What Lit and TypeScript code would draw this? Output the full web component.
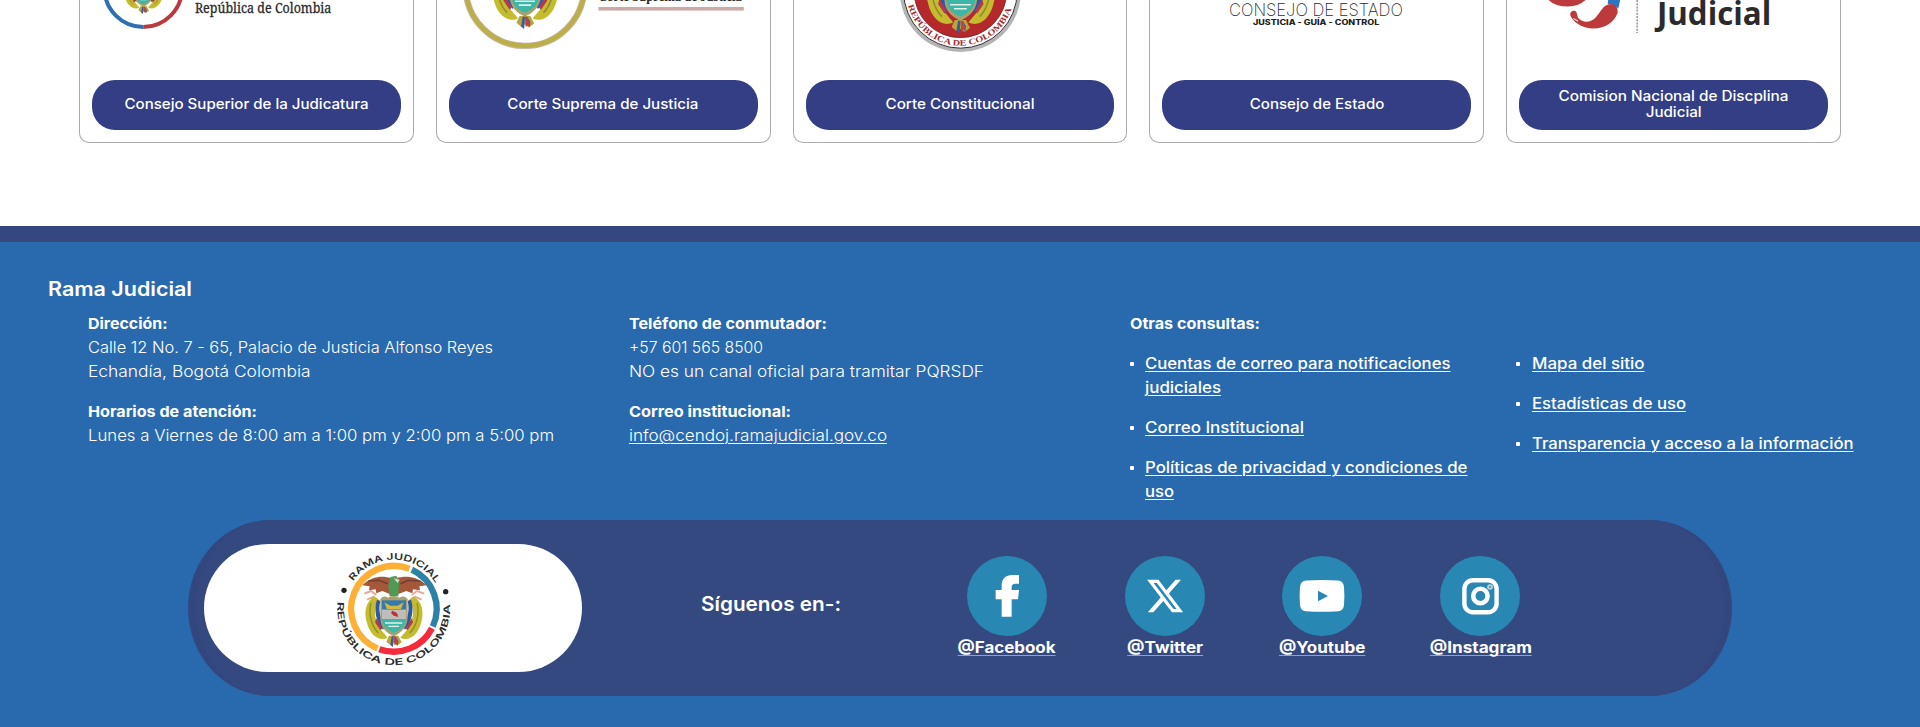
import { LitElement, html, svg, css } from "lit";
import { customElement } from "lit/decorators.js";

/* Text run stretched horizontally so that it occupies a given width. */
const fit = (text: string, width: number) =>
  html`<span class="fit" data-w=${width}>${text}</span>`;

/* Coat of arms, drawn around x = 248 with its ribbon ending at y = 318. */
const crest = (cx: number, bottom: number, s: number) => svg`
  <g transform="translate(${cx - 248 * s} ${bottom - 318 * s}) scale(${s})">
    <path d="M240 112C215 103 180 106 154 133L176 136 174 148 194 145 196 157 214 150 238 160Z" fill="#a5573a"/>
    <path d="M256 112C282 103 320 106 347 133L325 136 327 148 306 145 304 157 286 150 260 160Z" fill="#a5573a"/>
    <path d="M172 120L205 118 230 128M328 120L292 118 268 128" stroke="#6e4032" stroke-width="5" fill="none"/>
    <path d="M160 158L180 150 196 162M168 176L190 166M340 158L318 150 302 162M332 176L310 166" stroke="#e3aa9c" stroke-width="6" fill="none"/>
    <path d="M238 108L256 104 264 124 262 166 236 166 232 136Z" fill="#4f9a55"/>
    <path d="M248 112L266 116 260 126Z" fill="#dcdcd0"/>
    <path d="M190 166C164 182 158 214 168 246C176 280 204 304 230 290L206 262C190 232 184 200 206 178Z" fill="#c4bb2e"/>
    <path d="M308 166C334 182 340 214 330 246C322 280 294 304 268 290L292 262C308 232 314 200 292 178Z" fill="#c4bb2e"/>
    <path d="M180 186C172 216 180 254 202 276M318 186C326 216 318 254 296 276" stroke="#8f8d2c" stroke-width="4" fill="none"/>
    <path d="M198 176C188 206 194 240 216 266L224 254C206 232 202 206 208 180Z" fill="#2d58a5"/>
    <path d="M300 176C310 206 304 240 282 266L274 254C292 232 296 206 290 180Z" fill="#2d58a5"/>
    <path d="M196 232L214 262 208 268 192 244ZM302 232L284 262 290 268 306 244Z" fill="#b23a4c"/>
    <path d="M208 174Q218 162 230 170 248 160 266 170 278 162 290 174V232C288 262 268 276 248 286C228 276 208 262 208 232Z" fill="#a9a06a"/>
    <path d="M213 178H285V206H213Z" fill="#3579ad"/>
    <path d="M220 184L238 194 260 194 278 184 270 204H228Z" fill="#d1b944"/>
    <path d="M213 206H285V234H213Z" fill="#bdbdb9"/>
    <path d="M213 234H285C282 258 266 268 248 276C230 268 216 258 213 234Z" fill="#3bb7a7"/>
    <path d="M222 246H274M232 256H264" stroke="#e8efe9" stroke-width="4"/>
    <path d="M244 209L258 216 262 228 248 224 240 216Z" fill="#bf3038"/>
    <path d="M234 284L262 284 272 304 258 314 248 306 238 312 226 302Z" fill="#b7a63d"/>
    <path d="M242 286L248 286 246 318 238 312ZM254 286L262 300 260 314 252 300Z" fill="#3a5b9e"/>
    <path d="M248 286H254L262 306 250 312Z" fill="#b6474b"/>
  </g>`;

const logos = [
  svg`
    <path d="M143.3-50.6A38.8 38.8 0 0 0 143.3 27" fill="none" stroke="#2c6fb3" stroke-width="4"/>
    <path d="M143.3 27A38.8 38.8 0 0 0 143.3-50.6" fill="none" stroke="#b93b40" stroke-width="4"/>
    ${crest(143.5, 14, 0.23)}
    <text x="195" y="13" font-family="'Noto Serif','Liberation Serif',serif" font-size="14.2" fill="#2b2b2b" stroke="#2b2b2b" stroke-width=".3" textLength="136.5" lengthAdjust="spacingAndGlyphs">República de Colombia</text>`,
  svg`
    <circle cx="525" cy="-13.5" r="59.4" fill="none" stroke="#c9b3a4" stroke-width="6.4"/>
    <circle cx="525" cy="-13.5" r="59.3" fill="none" stroke="#bbaf47" stroke-width="4.6"/>
    ${crest(525, 29, 0.385)}
    <text x="598" y="1.3" font-family="'Liberation Serif',serif" font-weight="700" font-size="14" fill="#2a2a2a" textLength="144" lengthAdjust="spacingAndGlyphs">Corte Suprema de Justicia</text>
    <rect x="598.5" y="7" width="145.5" height="3.6" fill="#cda9a8"/>`,
  svg`
    <circle cx="960" cy="-8.6" r="60.6" fill="#b4b4b4"/>
    <circle cx="960" cy="-8.6" r="56.8" fill="#fff" stroke="#3a3030" stroke-width="1"/>
    <circle cx="960" cy="-8.6" r="46.3" fill="#b5282b" stroke="#5d2222" stroke-width=".7"/>
    ${crest(960, 33.5, 0.4)}
    <path id="seal-arc" d="M907.8 5.5A54 54 0 0 0 1012.2 5.5" fill="none"/>
    <text font-family="'Liberation Serif',serif" font-weight="700" font-size="8.4" fill="#9c3034"><textPath href="#seal-arc" textLength="138" lengthAdjust="spacingAndGlyphs">REPÚBLICA DE COLOMBIA</textPath></text>`,
  svg`
    <text x="1229" y="15.6" font-family="Inter,'Liberation Sans',sans-serif" font-weight="200" font-size="17.4" fill="#2c2c2c" textLength="174" lengthAdjust="spacingAndGlyphs">CONSEJO DE ESTADO</text>
    <text x="1253" y="25.3" font-family="Inter,'Liberation Sans',sans-serif" font-weight="800" font-size="7.3" fill="#222" textLength="126.5" lengthAdjust="spacingAndGlyphs">JUSTICIA - GUÍA - CONTROL</text>`,
  svg`
    <g transform="translate(1490 0) scale(.331)">
      <path d="M170-8Q190 20 236 20 276 18 296-8Z" fill="#bd3a3c"/>
      <path d="M358-8L356 12Q374 10 388 26L395-8Z" fill="#2876c5"/>
      <path d="M243 46C240 34 254 28 261 36L266 54C282 72 306 68 320 52C336 34 342 12 368 12Q388 16 386 38C376 68 346 88 308 86C276 84 250 66 243 46Z" fill="#bd3a3c"/>
      <path d="M252 56L266 64" stroke="#e6d9d3" stroke-width="4"/>
    </g>
    <path d="M1637.2 0V33" stroke="#777" stroke-width="1.2" stroke-dasharray="2 1.2"/>
    <text x="1657" y="25.3" font-family="'Open Sans','Noto Sans',sans-serif" font-weight="700" font-size="32.5" fill="#2b2b2d" textLength="114.5" lengthAdjust="spacingAndGlyphs">Judicial</text>`,
];

const courts = [
  { x: 80, lines: [["Consejo Superior de la Judicatura", 244]] },
  { x: 437, lines: [["Corte Suprema de Justicia", 191]] },
  { x: 793.5, lines: [["Corte Constitucional", 149]] },
  { x: 1150, lines: [["Consejo de Estado", 134.5]] },
  { x: 1507, lines: [["Comision Nacional de Discplina", 230], ["Judicial", 56]] },
] as { x: number; lines: [string, number][] }[];

const linksA: [string, number][][] = [
  [["Cuentas de correo para notificaciones", 305.5], ["judiciales", 76]],
  [["Correo Institucional", 159]],
  [["Políticas de privacidad y condiciones de", 322.5], ["uso", 29]],
];
const linksB: [string, number][][] = [
  [["Mapa del sitio", 112.5]],
  [["Estadísticas de uso", 154]],
  [["Transparencia y acceso a la información", 321.5]],
];

const socials = [
  {
    name: "@Facebook", w: 98,
    icon: svg`<path transform="scale(.3333)" d="M104 182V130H86V102H104V88C104 68 116 57 136 57H156V83H145C137 83 134 87 134 93V102H156L153 130H134V182Z" fill="#fff"/>`,
  },
  {
    name: "@Twitter", w: 76,
    icon: svg`<path transform="translate(20 20) scale(1.67)" d="M18.244 2.25h3.308l-7.227 8.26 8.502 11.24H16.17l-5.214-6.817L4.99 21.75H1.68l7.73-8.835L1.254 2.25H8.08l4.713 6.231zm-1.161 17.52h1.833L7.084 4.126H5.117z" fill="#fff"/>`,
  },
  {
    name: "@Youtube", w: 86.5,
    icon: svg`<path d="M24 24.6Q40 23.4 56 24.6 61.4 25 62 31 62.8 40 62 49 61.4 54.8 56 55.2 40 56.4 24 55.2 18.6 54.8 18 49 17.2 40 18 31 18.6 25 24 24.6Z" fill="#fff"/><path d="M36 34.8L46 40 36 45.2Z" fill="#2887b3"/>`,
  },
  {
    name: "@Instagram", w: 102,
    icon: svg`<rect x="24.4" y="24.2" width="32.2" height="32" rx="8.5" fill="none" stroke="#fff" stroke-width="4.4"/><circle cx="40.4" cy="40" r="7.2" fill="none" stroke="#fff" stroke-width="4.6"/><circle cx="50" cy="31" r="2.8" fill="#c3d3da"/><circle cx="50" cy="31" r="1.2" fill="#6c9fb5"/>`,
  },
];

@customElement("app-root")
export class AppRoot extends LitElement {
  static styles = css`
    :host {
      display: block;
      height: 727px;
      overflow: hidden;
      background: #fff;
      font-family: Inter, "Open Sans", "Liberation Sans", sans-serif;
      font-size: 15.4px;
      color: #fff;
    }
    a { color: inherit; text-decoration: none; }
    .fit { display: inline-block; white-space: nowrap; transform-origin: 0 50%; }
    .courts {
      display: grid;
      grid-template-columns: repeat(5, 1fr);
      gap: 22px;
      padding: 0 79px;
      height: 143px;
    }
    .card {
      box-sizing: border-box;
      border: 1px solid #aaa;
      border-top: 0;
      border-radius: 0 0 10px 10px;
      height: 143px;
      overflow: hidden;
    }
    .logo { display: block; width: 100%; height: 80px; }
    .pill {
      display: flex;
      flex-direction: column;
      align-items: center;
      justify-content: center;
      height: 50px;
      margin: 0 12px;
      padding-bottom: 2px;
      box-sizing: border-box;
      border-radius: 23px;
      background: #343e85;
      font-size: 13.9px;
      font-weight: 500;
      line-height: 16px;
    }
    .pill .fit, .social .fit { transform-origin: 50% 50%; }
    footer {
      margin-top: 83px;
      height: 501px;
      box-sizing: border-box;
      border-top: 16px solid #34487f;
      background: #296aae;
      padding-top: 32px;
    }
    h2 {
      margin: 0;
      padding-left: 48px;
      font-size: 19.4px;
      line-height: 30px;
      font-weight: 600;
    }
    .info {
      display: grid;
      grid-template-columns: 541px 500.5px 386.5px 388px;
      padding: 8px 0 0 88px;
      height: 208px;
      box-sizing: border-box;
      line-height: 24px;
      font-weight: 300;
    }
    .line { display: block; height: 24px; }
    .label { font-weight: 700; font-size: 15px; }
    .gap { margin-top: 16px; }
    .under .fit { text-decoration: underline 1px; text-underline-offset: 2px; }
    ul { list-style: none; margin: 0; padding: 0; font-weight: 450; }
    .first { margin-top: 16px; }
    .second { margin-top: 40px; }
    li { display: flex; margin-bottom: 16px; }
    .dot {
      width: 4px;
      height: 4px;
      margin: 10px 11.5px 0 0;
      border-radius: 1px;
      background: #fff;
      flex: none;
    }
    .banner {
      display: flex;
      align-items: center;
      box-sizing: border-box;
      width: 1544px;
      height: 176px;
      margin: 8px 0 0 188px;
      border: 8px solid #33477e;
      border-block-width: 0;
      border-radius: 82px / 88px;
      background: #34497f;
      padding-left: 8px;
    }
    .emblem {
      display: flex;
      align-items: center;
      justify-content: center;
      width: 378px;
      height: 128px;
      border-radius: 64px;
      background: #fff;
    }
    .follow {
      width: 139px;
      margin-left: 119px;
      padding-bottom: 8px;
      font-size: 19.6px;
      line-height: 28px;
      font-weight: 600;
    }
    .socials {
      display: grid;
      grid-template-columns: repeat(4, 157.8px);
      margin-left: 88px;
      padding-bottom: 1px;
    }
    .social {
      display: flex;
      flex-direction: column;
      align-items: center;
      font-weight: 700;
      line-height: 23px;
    }
    .social .fit {
      text-decoration: underline 1px #4fc3bd;
      text-underline-offset: 2px;
      text-decoration-skip-ink: none;
    }
    .badge { display: block; width: 80px; height: 80px; border-radius: 50%; background: #2887b3; }
  `;

  firstUpdated() {
    this.renderRoot.querySelectorAll<HTMLElement>(".fit").forEach((el) => {
      const natural = el.getBoundingClientRect().width;
      if (natural) el.style.transform = `scaleX(${(Number(el.dataset.w) / natural).toFixed(4)})`;
    });
  }

  private links(items: [string, number][][], cls: string) {
    return html`<ul class=${cls}>
      ${items.map((lines) => html`<li><span class="dot"></span><a class="under">${lines.map(([t, w]) => html`<span class="line">${fit(t, w)}</span>`)}</a></li>`)}
    </ul>`;
  }

  render() {
    return html`
      <section class="courts">
        ${courts.map((c, i) => html`
          <article class="card">
            <svg class="logo" viewBox="${c.x} 0 333 80" preserveAspectRatio="xMinYMin meet">${logos[i]}</svg>
            <a class="pill">${c.lines.map(([t, w]) => fit(t, w))}</a>
          </article>`)}
      </section>
      <footer>
        <h2>${fit("Rama Judicial", 144)}</h2>
        <div class="info">
          <div>
            <span class="line label">${fit("Dirección:", 79.5)}</span>
            <span class="line">${fit("Calle 12 No. 7 - 65, Palacio de Justicia Alfonso Reyes", 405)}</span>
            <span class="line">${fit("Echandía, Bogotá Colombia", 222.5)}</span>
            <span class="line label gap">${fit("Horarios de atención:", 169)}</span>
            <span class="line">${fit("Lunes a Viernes de 8:00 am a 1:00 pm y 2:00 pm a 5:00 pm", 466)}</span>
          </div>
          <div>
            <span class="line label">${fit("Teléfono de conmutador:", 198)}</span>
            <span class="line">${fit("+57 601 565 8500", 134)}</span>
            <span class="line">${fit("NO es un canal oficial para tramitar PQRSDF", 355)}</span>
            <span class="line label gap">${fit("Correo institucional:", 162)}</span>
            <a class="line under">${fit("info@cendoj.ramajudicial.gov.co", 258)}</a>
          </div>
          <div>
            <span class="line label">${fit("Otras consultas:", 130)}</span>
            ${this.links(linksA, "first")}
          </div>
          <div>${this.links(linksB, "second")}</div>
        </div>
        <div class="banner">
          <div class="emblem">
            <svg width="128" height="126" viewBox="54 12 384 378">
              <path d="M199.7 322.6A129 129 0 0 1 295.3 83" fill="none" stroke="#fdb035" stroke-width="19"/>
              <path d="M302.5 86.1A129 129 0 0 1 365.4 256.5" fill="none" stroke="#2e81a6" stroke-width="19"/>
              <path d="M362.9 261.6A129 129 0 0 1 204.9 324.6" fill="none" stroke="#f52b3c" stroke-width="19"/>
              ${crest(248, 318, 1)}
              <path id="top-arc" d="M126.1 120.8A147 147 0 0 1 374 127.3" fill="none"/>
              <path id="bottom-arc" d="M80.3 182.4A169 169 0 1 0 415.7 182.4" fill="none"/>
              <g font-family="Inter,'Liberation Sans',sans-serif" font-weight="600" font-size="27" fill="#2d2d2d">
                <text><textPath href="#top-arc" textLength="294" lengthAdjust="spacingAndGlyphs">RAMA JUDICIAL</textPath></text>
                <text><textPath href="#bottom-arc" textLength="566" lengthAdjust="spacingAndGlyphs">REPÚBLICA DE COLOMBIA</textPath></text>
              </g>
              <circle cx="99" cy="148" r="8" fill="#222"/>
              <circle cx="404" cy="152" r="8" fill="#222"/>
            </svg>
          </div>
          <div class="follow">${fit("Síguenos en-:", 140)}</div>
          <nav class="socials">
            ${socials.map((s) => html`<a class="social"><svg class="badge" viewBox="0 0 80 80">${s.icon}</svg>${fit(s.name, s.w)}</a>`)}
          </nav>
        </div>
      </footer>
    `;
  }
}
